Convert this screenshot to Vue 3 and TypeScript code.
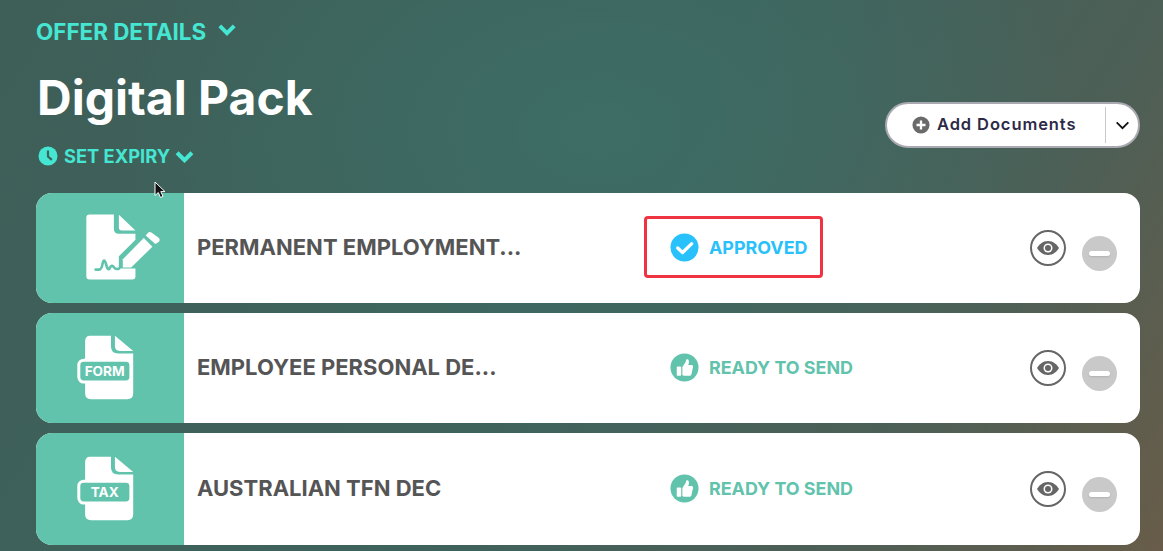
<script setup lang="ts">
interface Doc {
  name: string
  kind: 'sign' | 'form' | 'tax'
  status: 'approved' | 'ready'
}

const docs: Doc[] = [
  { name: 'PERMANENT EMPLOYMENT...', kind: 'sign', status: 'approved' },
  { name: 'EMPLOYEE PERSONAL DE...', kind: 'form', status: 'ready' },
  { name: 'AUSTRALIAN TFN DEC', kind: 'tax', status: 'ready' }
]
</script>

<template>
  <main class="page">
    <header class="top">
      <div class="intro">
        <button class="offer">
          OFFER DETAILS
          <svg class="chev-lg" viewBox="0 0 20 14" fill="none" stroke="currentColor" stroke-width="4.4"><path d="M2 3l8 8 8-8" /></svg>
        </button>
        <h1>Digital Pack</h1>
        <button class="expiry">
          <svg class="clock" viewBox="0 0 20 20">
            <circle cx="10" cy="10" r="9.5" fill="currentColor" />
            <path d="M10 4.500V10.500L13.800 13.800" fill="none" stroke="#3f5f58" stroke-width="2.2" />
          </svg>
          SET EXPIRY
          <svg class="chev-md" viewBox="0 0 20 14" fill="none" stroke="currentColor" stroke-width="4.4"><path d="M2 3l8 8 8-8" /></svg>
        </button>
      </div>
      <div class="add">
        <span class="add-main">
          <svg class="plus" viewBox="0 0 20 20">
            <circle cx="10" cy="10" r="9.5" fill="#6a6a6a" />
            <path d="M10 5v10M5 10h10" stroke="#fff" stroke-width="2.6" />
          </svg>
          Add Documents
        </span>
        <span class="add-more">
          <svg viewBox="0 0 16 10" fill="none" stroke="#111" stroke-width="2"><path d="M1.500 1.500L8 8l6.500-6.500" /></svg>
        </span>
      </div>
    </header>

    <section class="list">
      <article v-for="doc in docs" :key="doc.name" class="card">
        <div class="thumb">
          <svg v-if="doc.kind === 'sign'" class="doc-sign" viewBox="160 70 235 210">
            <path fill="#fff" d="M177 77H250V120Q250 135 265 135H315V153L265 203V240H315V263Q315 273 305 273H177Q167 273 167 263V87Q167 77 177 77Z" />
            <path fill="#fff" d="M265 78L315 125H274Q265 125 265 116Z" />
            <path fill="none" stroke="#62c3ad" stroke-width="8" stroke-linecap="round" d="M195 243H205Q213 243 216 225Q220 207 226 225Q232 250 238 238Q244 226 250 236Q256 244 266 240" />
            <path fill="#fff" d="M277 237V212L340 148L366 174L302 237Z" />
            <path fill="#fff" d="M352 133Q358 127 365 133L385 147Q391 153 385 160L375 166L346 140Z" />
          </svg>
          <svg v-else class="doc-file" viewBox="140 70 180 205">
            <path fill="#fff" d="M182 78H245V110Q245 132 267 132H312V252Q312 270 294 270H185Q167 270 167 252V96Q167 78 182 78Z" />
            <path fill="#fff" d="M257 78L312 124H272Q257 124 257 110Z" />
            <rect x="148" y="152" width="157" height="66" rx="15" fill="#62c3ad" stroke="#fff" stroke-width="9" />
            <text x="226" y="199" text-anchor="middle" class="file-label">{{ doc.kind === 'form' ? 'FORM' : 'TAX' }}</text>
          </svg>
        </div>

        <h2 class="name">{{ doc.name }}</h2>

        <div class="status" :class="doc.status">
          <svg v-if="doc.status === 'approved'" class="status-icon" viewBox="0 0 30 30">
            <circle cx="15" cy="15" r="14.5" fill="#29c1fb" />
            <path d="M8 15.500l5 4.700L22.500 11" fill="none" stroke="#fff" stroke-width="3.4" stroke-linecap="round" stroke-linejoin="round" />
          </svg>
          <svg v-else class="status-icon" viewBox="0 0 30 30">
            <circle cx="15" cy="15" r="14.5" fill="#62c3ad" />
            <rect x="7" y="14" width="4.600" height="9.600" rx="1" fill="#fff" />
            <path fill="#fff" d="M12.800 14.400L16 9.600Q16.600 8.300 16.800 6.600Q18.800 6 19.500 8Q20 10 18.800 12.400H22.400Q24.200 12.600 23.800 14.400L22.200 22Q21.800 23.600 20 23.600H14.600Q13.400 23.600 12.800 22.800Z" />
          </svg>
          {{ doc.status === 'approved' ? 'APPROVED' : 'READY TO SEND' }}
          <span v-if="doc.status === 'approved'" class="highlight"></span>
        </div>

        <div class="actions">
          <span class="eye">
            <svg viewBox="0 0 24 16">
              <path fill="#666" d="M12 1C6.800 1 3 4.600 1 8c2 3.400 5.800 7 11 7s9-3.600 11-7c-2-3.400-5.800-7-11-7Z" />
              <circle cx="12" cy="8" r="4.500" fill="#fff" />
              <circle cx="12" cy="8" r="3" fill="#666" />
            </svg>
          </span>
          <span class="minus"><i></i></span>
        </div>
      </article>
    </section>

    <svg class="cursor" viewBox="0 0 12 18">
      <path d="M1 1V14.500L4.300 11.500L6.500 16.500L9 15.400L6.800 10.600H11Z" fill="#111" stroke="#fff" stroke-width="1" />
    </svg>
  </main>
</template>

<style>
html, body {
  margin: 0;
}
</style>

<style scoped>
.page {
  position: relative;
  box-sizing: border-box;
  width: 1163px;
  height: 551px;
  overflow: hidden;
  padding: 0 23px 0 36px;
  font-family: Inter, "Liberation Sans", sans-serif;
  background:
    radial-gradient(ellipse 480px 320px at 600px 130px, rgba(60, 112, 104, 0.8), rgba(60, 112, 104, 0) 100%),
    linear-gradient(122deg, #3e5f58 0%, #3e625c 50%, #4d5f56 78%, #685c49 100%);
}

.top {
  display: flex;
  justify-content: space-between;
  align-items: flex-start;
  height: 193px;
}

.intro {
  display: flex;
  flex-direction: column;
  align-items: flex-start;
}

button {
  display: flex;
  align-items: center;
  padding: 0;
  border: 0;
  background: none;
  font-family: inherit;
  font-weight: 700;
  color: #45e6d2;
}

.offer {
  margin-top: 17px;
  height: 28px;
  font-size: 22.4px;
  gap: 12px;
}

.chev-lg {
  width: 18px;
  height: 13px;
  margin-bottom: 4px;
}

h1 {
  margin: 25px 0 0 1px;
  font-size: 48px;
  line-height: 56px;
  font-weight: 700;
  color: #fff;
}

.expiry {
  margin: 17px 0 0 2px;
  height: 26px;
  font-size: 18.3px;
  gap: 6px;
}

.expiry .chev-md {
  margin-left: -1px;
}

.clock {
  width: 20px;
  height: 20px;
}

.chev-md {
  width: 19px;
  height: 13px;
}

.add {
  display: flex;
  align-items: center;
  box-sizing: border-box;
  width: 255px;
  height: 46px;
  margin-top: 102px;
  background: #fff;
  border: 2px solid #a9a9b1;
  border-radius: 23px;
}

.add-main {
  flex: 1;
  display: flex;
  align-items: center;
  gap: 7px;
  box-sizing: border-box;
  height: 36px;
  padding: 0 0 2px 25px;
  border-right: 1px solid #c9c9c9;
  font-size: 16.5px;
  font-weight: 600;
  letter-spacing: 0.9px;
  color: #2d2a48;
}

.plus {
  width: 18px;
  height: 18px;
  margin-top: 2px;
}

.add-more {
  display: flex;
  justify-content: center;
  width: 32px;
}

.add-more svg {
  width: 15px;
  height: 9px;
}

.list {
  display: flex;
  flex-direction: column;
  gap: 10px;
}

.card {
  display: grid;
  grid-template-columns: 148px 1fr 360px 110px;
  align-items: center;
  height: 110px;
  background: #fff;
  border-radius: 16px;
  overflow: hidden;
}

.card:last-child {
  height: 112px;
}

.thumb {
  display: flex;
  align-items: center;
  justify-content: center;
  height: 100%;
  background: #62c3ad;
}

.doc-sign {
  width: 78px;
  height: 70px;
  margin-left: 26px;
  margin-top: -2px;
}

.doc-file {
  width: 60px;
  height: 68px;
  margin-left: -8px;
  margin-top: -2px;
}

.file-label {
  font-family: Inter, "Liberation Sans", sans-serif;
  font-size: 41px;
  font-weight: 700;
  fill: #fff;
}

.name {
  margin: 0 0 3px 13px;
  font-size: 22px;
  font-weight: 700;
  color: #555;
  white-space: nowrap;
}

.status {
  position: relative;
  display: flex;
  align-items: center;
  gap: 10px;
  margin-bottom: 2px;
  font-size: 17.9px;
  font-weight: 700;
}

.status.approved {
  color: #29c1fb;
}

.status.ready {
  color: #62c3ad;
}

.status-icon {
  width: 29px;
  height: 29px;
}

.highlight {
  position: absolute;
  left: -26px;
  top: -17px;
  width: 173px;
  height: 56px;
  border: 3px solid #ef3340;
  border-radius: 4px;
}

.actions {
  display: flex;
  gap: 16px;
  margin-top: 4px;
}

.eye {
  display: flex;
  align-items: center;
  justify-content: center;
  box-sizing: border-box;
  width: 36px;
  height: 36px;
  border: 2.5px solid #666;
  border-radius: 50%;
}

.eye svg {
  width: 24px;
  height: 16px;
}

.minus {
  display: flex;
  align-items: center;
  justify-content: center;
  width: 35px;
  height: 35px;
  margin-top: 6px;
  background: #c9c9c9;
  border-radius: 50%;
}

.minus i {
  width: 21px;
  height: 5px;
  background: #fff;
  border-radius: 3px;
  box-shadow: 0 1px 2px rgba(0, 0, 0, 0.12);
}

.cursor {
  position: absolute;
  left: 154px;
  top: 181px;
  width: 12px;
  height: 18px;
}
</style>
